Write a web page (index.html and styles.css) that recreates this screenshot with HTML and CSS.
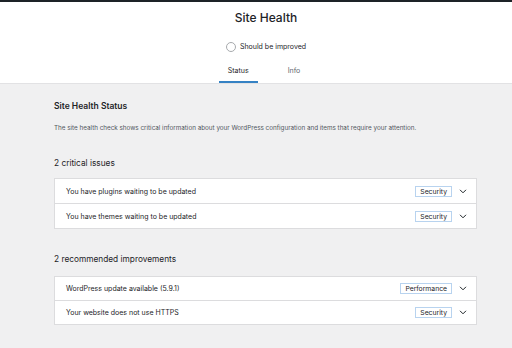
FILE: index.html
```html
<!DOCTYPE html>
<html lang="en">
<head>
    <meta charset="UTF-8">
    <meta name="viewport" content="width=device-width, initial-scale=1.0">
    <title>Site Health</title>
    <link rel="stylesheet" href="styles.css">
</head>
<body>

    <!-- Admin bar strip -->
    <div class="top-bar"></div>

    <!-- Header with title, score and tabs -->
    <header class="health-header">
        <h1 class="health-title">Site Health</h1>
        <div class="health-progress">
            <span class="progress-circle"></span>
            <span>Should be improved</span>
        </div>
        <nav class="health-tabs">
            <a class="health-tab active">Status</a>
            <a class="health-tab">Info</a>
        </nav>
    </header>

    <main class="health-body">
        <h2 class="section-title">Site Health Status</h2>
        <p class="section-desc">The site health check shows critical information about your WordPress configuration and items that require your attention.</p>

        <h3 class="issues-title">2 critical issues</h3>
        <div class="issues-list">
            <div class="issue-row">
                <span class="issue-label">You have plugins waiting to be updated</span>
                <span class="badge">Security</span>
                <svg class="chevron" width="8" height="5" viewBox="0 0 8 5"><path d="M1 0.8 L4 3.8 L7 0.8" fill="none" stroke="#1d2327" stroke-width="1"/></svg>
            </div>
            <div class="issue-row">
                <span class="issue-label">You have themes waiting to be updated</span>
                <span class="badge">Security</span>
                <svg class="chevron" width="8" height="5" viewBox="0 0 8 5"><path d="M1 0.8 L4 3.8 L7 0.8" fill="none" stroke="#1d2327" stroke-width="1"/></svg>
            </div>
        </div>

        <h3 class="issues-title recommended">2 recommended improvements</h3>
        <div class="issues-list compact">
            <div class="issue-row">
                <span class="issue-label">WordPress update available (5.9.1)</span>
                <span class="badge">Performance</span>
                <svg class="chevron" width="8" height="5" viewBox="0 0 8 5"><path d="M1 0.8 L4 3.8 L7 0.8" fill="none" stroke="#1d2327" stroke-width="1"/></svg>
            </div>
            <div class="issue-row">
                <span class="issue-label">Your website does not use HTTPS</span>
                <span class="badge">Security</span>
                <svg class="chevron" width="8" height="5" viewBox="0 0 8 5"><path d="M1 0.8 L4 3.8 L7 0.8" fill="none" stroke="#1d2327" stroke-width="1"/></svg>
            </div>
        </div>
    </main>

</body>
</html>
```

FILE: styles.css
```css
body {
    margin: 0;
    padding: 0;
    font-family: 'Inter', 'Liberation Sans', sans-serif;
    color: #1d2327;
    background-color: #f0f0f1;
    height: 348px;
    overflow: hidden;
}

.top-bar {
    height: 2px;
    background-color: #1d2327;
}

/* Header */
.health-header {
    background-color: #fff;
    border-bottom: 1px solid #e2e2e4;
    padding: 8px 0 0 20px;
    display: flex;
    flex-direction: column;
    align-items: center;
}

.health-title {
    margin: 0;
    font-size: 12px;
    line-height: 16px;
    font-weight: 500;
}

.health-progress {
    margin-top: 16px;
    display: flex;
    align-items: center;
    gap: 4px;
    font-size: 7px;
    line-height: 10px;
}

.progress-circle {
    width: 8px;
    height: 8px;
    border: 1px solid #a7aaad;
    border-radius: 50%;
}

.health-tabs {
    margin: 5px 4px 0 0;
    display: flex;
    gap: 21px;
}

.health-tab {
    padding: 9px 9px 5px;
    font-size: 7px;
    line-height: 10px;
    color: #646970;
    border-bottom: 2px solid transparent;
}

.health-tab.active {
    color: #1d2327;
    border-bottom-color: #3582c4;
}

/* Body */
.health-body {
    padding: 16px 35px 0 54px;
}

.section-title {
    margin: 0;
    font-size: 8.5px;
    line-height: 12px;
    font-weight: 600;
}

.section-desc {
    margin: 11px 0 0;
    font-size: 6.3px;
    line-height: 10px;
    color: #50575e;
}

.issues-title {
    margin: 24px 0 9px;
    font-size: 8.3px;
    line-height: 12px;
    font-weight: 400;
}

.issues-title.recommended {
    margin: 24px 0 11px;
}

.issues-list {
    background-color: #fff;
    border: 1px solid #dcdcde;
}

.issue-row {
    display: flex;
    align-items: center;
    height: 24px;
    padding: 0 9px 0 11px;
    font-size: 7px;
}

.issues-list.compact .issue-row {
    height: 23px;
}

.issue-row + .issue-row {
    border-top: 1px solid #dcdcde;
}

.issue-label {
    flex: 1;
}

.badge {
    padding: 0 4px;
    line-height: 9px;
    font-size: 6.8px;
    border: 1px solid #b8d3ef;
    margin-right: 7px;
}

.chevron {
    display: block;
}
```
